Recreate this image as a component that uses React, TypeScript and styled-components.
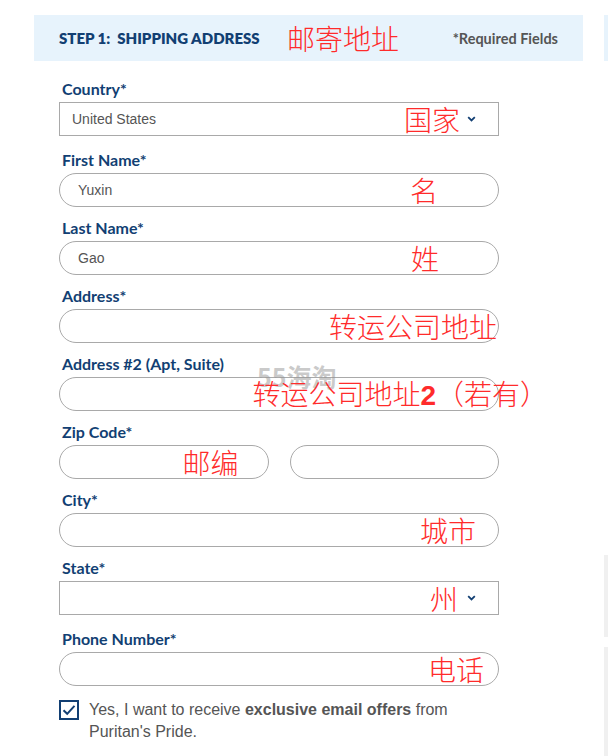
import React from 'react'
import styled, { createGlobalStyle } from 'styled-components'

const GlobalStyle = createGlobalStyle`
  body {
    margin: 0;
    background: #fff;
    font-family: "Liberation Sans", Arial, sans-serif;
  }
`

const fields = [
  { label: 'First Name*', value: 'Yuxin', note: '名', right: 60 },
  { label: 'Last Name*', value: 'Gao', note: '姓', right: 59 },
  { label: 'Address*', value: '', note: '转运公司地址', right: 1 },
]

const Chevron = () => (
  <svg width="9" height="6" viewBox="0 0 9 6">
    <path d="M1.2 1.2 L4.5 4.4 L7.8 1.2" fill="none" stroke="#123f73" strokeWidth="1.8" />
  </svg>
)

const Check = () => (
  <svg width="14" height="12" viewBox="0 0 14 12">
    <path d="M1.5 6.2 L5.2 9.8 L12.5 1.8" fill="none" stroke="#123f73" strokeWidth="2" />
  </svg>
)

const App = () => {
  return (
    <Page>
      <GlobalStyle />
      <Main>
        <Header>
          <Title>STEP 1:&nbsp; SHIPPING ADDRESS</Title>
          <Note top={8} left={253}>邮寄地址</Note>
          <Required>*Required Fields</Required>
        </Header>

        <Form>
          <Field>
            <Label>Country*</Label>
            <Select>
              <SelectText>United States</SelectText>
              <Note right={38}>国家</Note>
              <Chevron />
            </Select>
          </Field>

          {fields.map((f) => (
            <Field key={f.label}>
              <Label>{f.label}</Label>
              <Pill>
                <PillText>{f.value}</PillText>
                <Note right={f.right}>{f.note}</Note>
              </Pill>
            </Field>
          ))}

          <Field>
            <Label>Address #2 (Apt, Suite)</Label>
            <Pill>
              <Watermark>55海淘</Watermark>
              <Note right={-50}>
                转运公司地址<b>2</b>（若有）
              </Note>
            </Pill>
          </Field>

          <Field>
            <Label>Zip Code*</Label>
            <ZipRow>
              <Pill>
                <Note right={29}>邮编</Note>
              </Pill>
              <Pill />
            </ZipRow>
          </Field>

          <Field>
            <Label>City*</Label>
            <Pill>
              <Note right={22}>城市</Note>
            </Pill>
          </Field>

          <Field>
            <Label>State*</Label>
            <Select>
              <SelectText />
              <Note right={40}>州</Note>
              <Chevron />
            </Select>
          </Field>

          <Field>
            <Label>Phone Number*</Label>
            <Pill>
              <Note right={14}>电话</Note>
            </Pill>
          </Field>

          <OptIn>
            <Box>
              <Check />
            </Box>
            <OptText>
              Yes, I want to receive <strong>exclusive email offers</strong> from Puritan's Pride.
            </OptText>
          </OptIn>
        </Form>
      </Main>

      <Side>
        <SideHead />
        <SideBlock h={82} mt={494} />
        <SideBlock h={120} mt={10} />
      </Side>
    </Page>
  )
}

export default App

const Page = styled.div`
  display: flex;
  align-items: flex-start;
  width: 608px;
  height: 756px;
  overflow: hidden;
  padding-top: 15px;
  box-sizing: border-box;
`

const Main = styled.div`
  width: 549px;
  margin-left: 34px;
  flex-shrink: 0;
`

const Header = styled.div`
  position: relative;
  height: 46px;
  background: #e7f3fc;
  display: flex;
  align-items: center;
  justify-content: space-between;
  padding: 0 25px;
`

const Title = styled.div`
  font-family: Lato, "Noto Sans", sans-serif;
  font-weight: 800;
  font-size: 15px;
  color: #123f73;
`

const Required = styled.div`
  font-family: Lato, "Noto Sans", sans-serif;
  font-weight: 700;
  font-size: 14.5px;
  color: #555;
`

const Note = styled.span<{ right?: number; left?: number; top?: number }>`
  position: absolute;
  ${(p) => (p.left !== undefined ? `left: ${p.left}px;` : `right: ${p.right}px;`)}
  top: ${(p) => (p.top !== undefined ? `${p.top}px` : '50%')};
  ${(p) => (p.top !== undefined ? '' : 'transform: translateY(-50%);')}
  font-family: "Noto Sans CJK SC", sans-serif;
  font-weight: 300;
  font-size: 28px;
  line-height: 30px;
  color: #ff2b2b;
  white-space: nowrap;
  pointer-events: none;
  b {
    font-family: "Liberation Sans", sans-serif;
    font-weight: 700;
  }
`

const Watermark = styled.span`
  position: absolute;
  left: 197px;
  top: -16px;
  font-family: "Noto Sans CJK SC", sans-serif;
  font-weight: 700;
  font-size: 25px;
  line-height: 28px;
  color: rgba(150, 150, 150, 0.5);
  white-space: nowrap;
`

const Form = styled.div`
  padding: 18px 0 0 25px;
  width: 440px;
`

const Field = styled.div`
  display: flex;
  flex-direction: column;
`

const Label = styled.div`
  font-family: Lato, "Noto Sans", sans-serif;
  font-weight: 700;
  font-size: 16px;
  line-height: 20px;
  color: #123f73;
  padding-left: 3px;
  margin-bottom: 3px;
`

const Select = styled.div`
  position: relative;
  height: 34px;
  border: 1px solid #a9a9a9;
  box-sizing: border-box;
  display: flex;
  align-items: center;
  padding: 0 22px 0 12px;
  margin-bottom: 14px;
  justify-content: space-between;
`

const SelectText = styled.span`
  font-size: 14px;
  color: #555;
`

const Pill = styled.div`
  position: relative;
  flex: 1 0 auto;
  height: 34px;
  border: 1px solid #a9a9a9;
  border-radius: 17px;
  box-sizing: border-box;
  display: flex;
  align-items: center;
  padding: 0 18px;
  margin-bottom: 11px;
`

const PillText = styled.span`
  font-size: 14px;
  color: #555;
`

const ZipRow = styled.div`
  display: flex;
  gap: 21px;
`

const OptIn = styled.div`
  display: flex;
  align-items: flex-start;
  gap: 10px;
  margin-top: 2px;
`

const Box = styled.div`
  width: 20px;
  height: 20px;
  border: 2px solid #123f73;
  box-sizing: border-box;
  display: flex;
  align-items: center;
  justify-content: center;
  flex-shrink: 0;
  margin-top: 1px;
`

const OptText = styled.div`
  font-size: 16px;
  line-height: 22px;
  color: #555;
  width: 400px;
  strong {
    font-weight: 700;
  }
`

const Side = styled.div`
  margin-left: 21px;
  width: 40px;
  flex-shrink: 0;
  display: flex;
  flex-direction: column;
`

const SideHead = styled.div`
  height: 46px;
  background: #e7f3fc;
`

const SideBlock = styled.div<{ h: number; mt: number }>`
  height: ${(p) => p.h}px;
  margin-top: ${(p) => p.mt}px;
  background: #f0f0f0;
`
